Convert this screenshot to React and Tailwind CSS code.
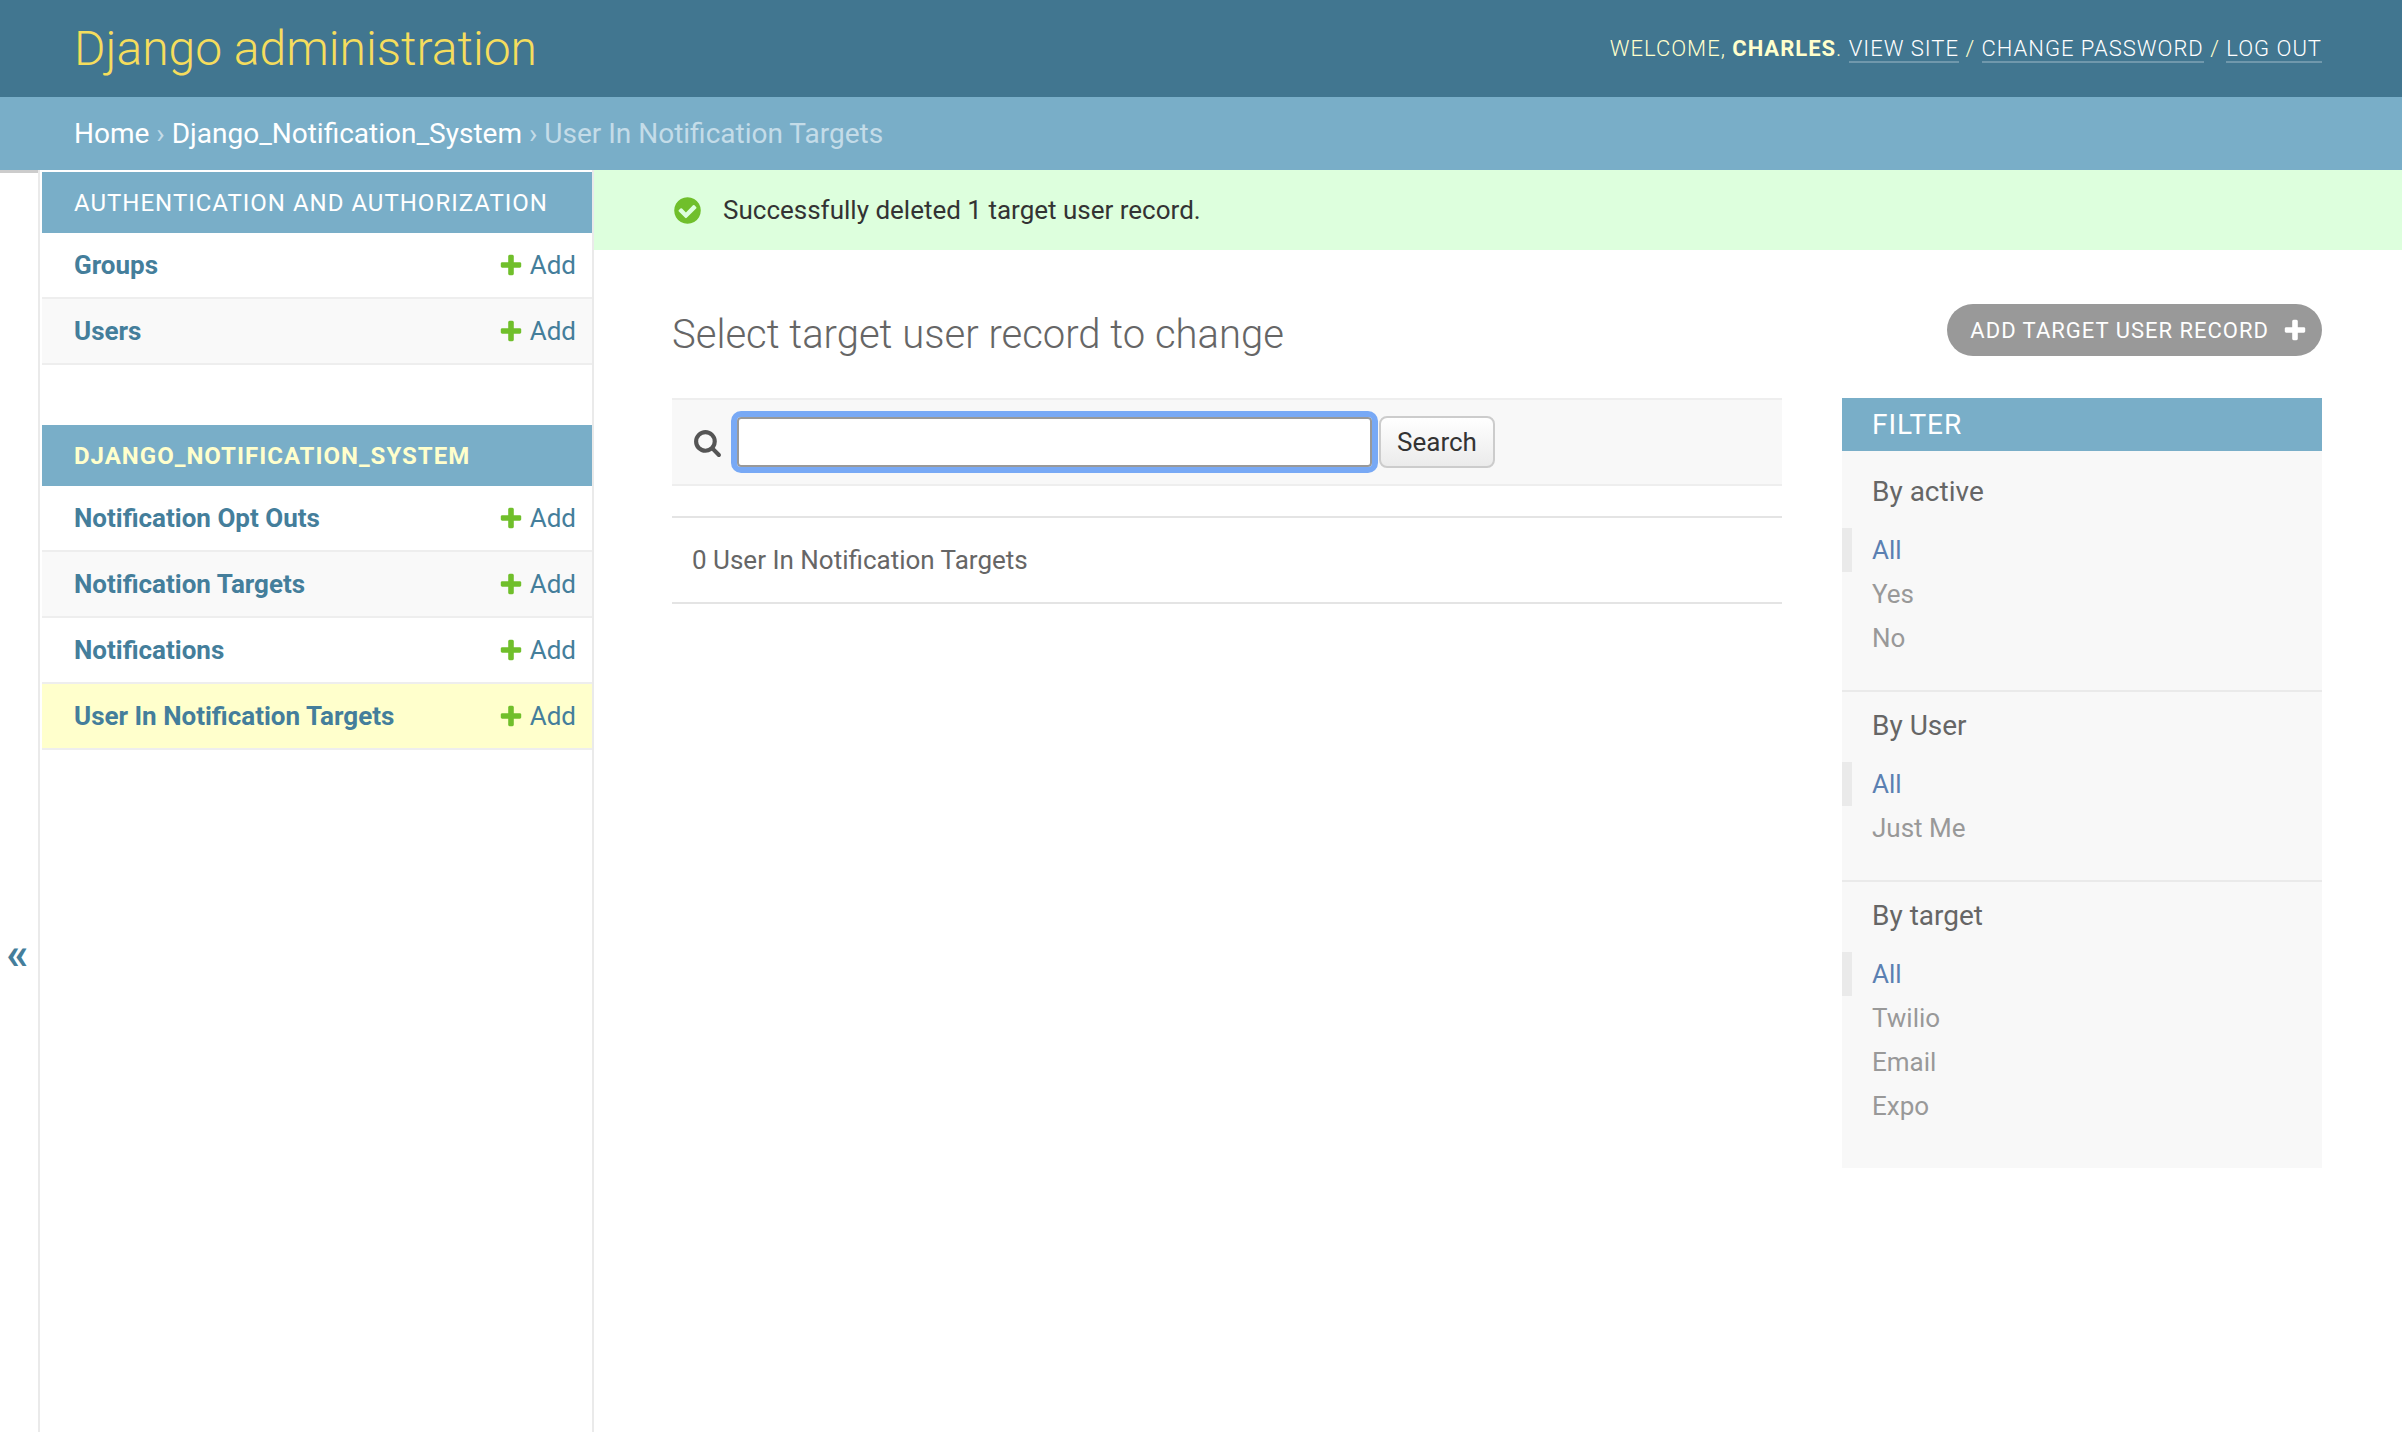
const FONT = "font-['Roboto',sans-serif]";

function PlusIcon({ className, fill = '#70bf2b' }) {
  return (
    <svg viewBox="0 0 1792 1792" className={className}>
      <path fill={fill} d="M1600 796v192q0 40-28 68t-68 28h-416v416q0 40-28 68t-68 28h-192q-40 0-68-28t-28-68v-416h-416q-40 0-68-28t-28-68v-192q0-40 28-68t68-28h416v-416q0-40 28-68t68-28h192q40 0 68 28t28 68v416h416q40 0 68 28t28 68z" />
    </svg>
  );
}

function YesIcon() {
  return (
    <svg viewBox="0 0 1792 1792" className="w-[31px] h-[31px]">
      <path fill="#70bf2b" d="M1412 734q0-28-18-46l-91-90q-19-19-45-19t-45 19l-408 407-226-226q-19-19-45-19t-45 19l-91 90q-18 18-18 46 0 27 18 45l362 362q19 19 45 19 27 0 46-19l543-543q18-18 18-45zm252 162q0 209-103 385.5t-279.5 279.5-385.5 103-385.5-103-279.5-279.5-103-385.5 103-385.5 279.5-279.5 385.5-103 385.5 103 279.5 279.5 103 385.5z" />
    </svg>
  );
}

function SearchIcon() {
  return (
    <svg viewBox="0 0 1792 1792" className="w-[29px] h-[29px]">
      <path fill="#555" d="M1216 832q0-185-131.5-316.5t-316.5-131.5-316.5 131.5-131.5 316.5 131.5 316.5 316.5 131.5 316.5-131.5 131.5-316.5zm512 832q0 52-38 90t-90 38q-54 0-90-38l-343-342q-179 124-399 124-143 0-273.5-55.5t-225-150-150-225-55.5-273.5 55.5-273.5 150-225 225-150 273.5-55.5 273.5 55.5 225 150 150 225 55.5 273.5q0 220-124 399l343 343q37 37 37 90z" />
    </svg>
  );
}

function NavRow({ label, alt, current }) {
  const bg = current ? 'bg-[#ffc]' : alt ? 'bg-[#f9f9f9]' : 'bg-white';
  return (
    <div className={`flex items-center justify-between h-[66px] pl-[32px] pr-[16px] border-b-2 border-[#eee] ${bg}`}>
      <a className="text-[26px] font-bold text-[#447e9b]">{label}</a>
      <a className="flex items-center text-[26px] text-[#447e9b]">
        <PlusIcon className="w-[26px] h-[26px] mr-[6px]" />
        Add
      </a>
    </div>
  );
}

function NavSection({ title, current, children }) {
  return (
    <div className="mb-[60px]">
      <div className={`flex items-center h-[61px] pl-[32px] bg-[#79aec8] text-[24px] uppercase tracking-[1px] ${current ? 'text-[#ffc] font-bold' : 'text-white'}`}>
        {title}
      </div>
      {children}
    </div>
  );
}

function FilterGroup({ title, options, first, last }) {
  return (
    <div className={`${first ? 'pt-[25px]' : 'pt-[18px]'} ${last ? 'pb-[40px]' : 'pb-[30px] border-b-2 border-[#eaeaea]'}`}>
      <h3 className="pl-[30px] text-[28px] leading-[32px] text-[#666] mb-[20px]">{title}</h3>
      <ul>
        {options.map((opt, i) => (
          <li
            key={opt}
            className={`h-[44px] flex items-center pl-[20px] text-[26px] border-l-[10px] ${i === 0 ? 'border-[#eaeaea] text-[#5b80b2]' : 'border-transparent text-[#999]'}`}
          >
            {opt}
          </li>
        ))}
      </ul>
    </div>
  );
}

export default function App() {
  return (
    <div className={`${FONT} w-[2402px] h-[1432px] overflow-hidden flex flex-col bg-white text-[#333]`}>
      {/* header */}
      <header className="flex items-center justify-between h-[97px] shrink-0 pl-[74px] pr-[80px] bg-[#417690]">
        <h1 className="text-[48px] font-light text-[#f5dd5d]">Django administration</h1>
        <div className="text-[22px] font-light uppercase tracking-[1px] text-[#ffc]">
          Welcome, <strong className="font-bold">Charles</strong>.{' '}
          <a className="text-white border-b-2 border-white/25">View site</a> /{' '}
          <a className="text-white border-b-2 border-white/25">Change password</a> /{' '}
          <a className="text-white border-b-2 border-white/25">Log out</a>
        </div>
      </header>

      {/* breadcrumbs */}
      <div className="flex items-center h-[73px] shrink-0 pl-[74px] bg-[#79aec8] text-[28px] text-[#c4dce8]">
        <a className="text-white">Home</a>
        <span className="whitespace-pre"> › </span>
        <a className="text-white">Django_Notification_System</a>
        <span className="whitespace-pre"> › User In Notification Targets</span>
      </div>

      <div className="flex flex-1 min-h-0">
        {/* sidebar toggle */}
        <div className="w-[38px] shrink-0 flex items-center justify-center border-t-[3px] border-[#ccc] text-[#447e9b] text-[44px] font-bold leading-none pt-[303px] pr-[3px]">
          «
        </div>

        {/* sidebar */}
        <nav className="w-[556px] shrink-0 pt-[2px] pl-[2px] border-x-2 border-[#eaeaea]">
          <NavSection title="Authentication and Authorization">
            <NavRow label="Groups" />
            <NavRow label="Users" alt />
          </NavSection>
          <NavSection title="Django_Notification_System" current>
            <NavRow label="Notification Opt Outs" />
            <NavRow label="Notification Targets" alt />
            <NavRow label="Notifications" />
            <NavRow label="User In Notification Targets" current />
          </NavSection>
        </nav>

        {/* content */}
        <main className="flex-1 min-w-0">
          <div className="flex items-center gap-[20px] h-[80px] pl-[78px] bg-[#dfd] text-[26px] text-[#333]">
            <YesIcon />
            Successfully deleted 1 target user record.
          </div>

          <div className="pl-[78px] pr-[80px] pt-[54px]">
            <div className="flex items-center justify-between h-[52px]">
              <h1 className="text-[40px] font-light text-[#666] pt-[10px]">Select target user record to change</h1>
              <a className="flex items-center h-[52px] pl-[23px] pr-[14px] rounded-full bg-[#999] text-white text-[22px] uppercase tracking-[1px]">
                Add target user record
                <PlusIcon className="w-[26px] h-[26px] ml-[13px]" fill="#fff" />
              </a>
            </div>

            <div className="flex items-start gap-[60px] mt-[42px]">
              {/* results */}
              <div className="w-[1110px] shrink-0">
                <div className="flex items-center h-[88px] pl-[21px] bg-[#f8f8f8] border-y-2 border-[#eee]">
                  <SearchIcon />
                  <input className="ml-[15px] w-[635px] h-[50px] bg-white rounded-[4px] border-2 border-[#999] outline-[6px] outline-[#78a9f5] box-border" />
                  <button className="ml-[7px] h-[52px] w-[116px] rounded-[8px] border-2 border-[#ccc] bg-gradient-to-b from-white to-[#ebebeb] text-[26px] text-[#333]">
                    Search
                  </button>
                </div>
                <div className="mt-[30px] flex items-center h-[88px] pl-[20px] border-y-2 border-[#e4e4e4] text-[26px] text-[#666]">
                  0 User In Notification Targets
                </div>
              </div>

              {/* filter */}
              <aside className="w-[480px] shrink-0 bg-[#f8f8f8]">
                <h2 className="flex items-center h-[53px] pl-[30px] bg-[#79aec8] text-[28px] uppercase tracking-[1px] text-white">Filter</h2>
                <FilterGroup title="By active" options={['All', 'Yes', 'No']} first />
                <FilterGroup title="By User" options={['All', 'Just Me']} />
                <FilterGroup title="By target" options={['All', 'Twilio', 'Email', 'Expo']} last />
              </aside>
            </div>
          </div>
        </main>
      </div>
    </div>
  );
}
